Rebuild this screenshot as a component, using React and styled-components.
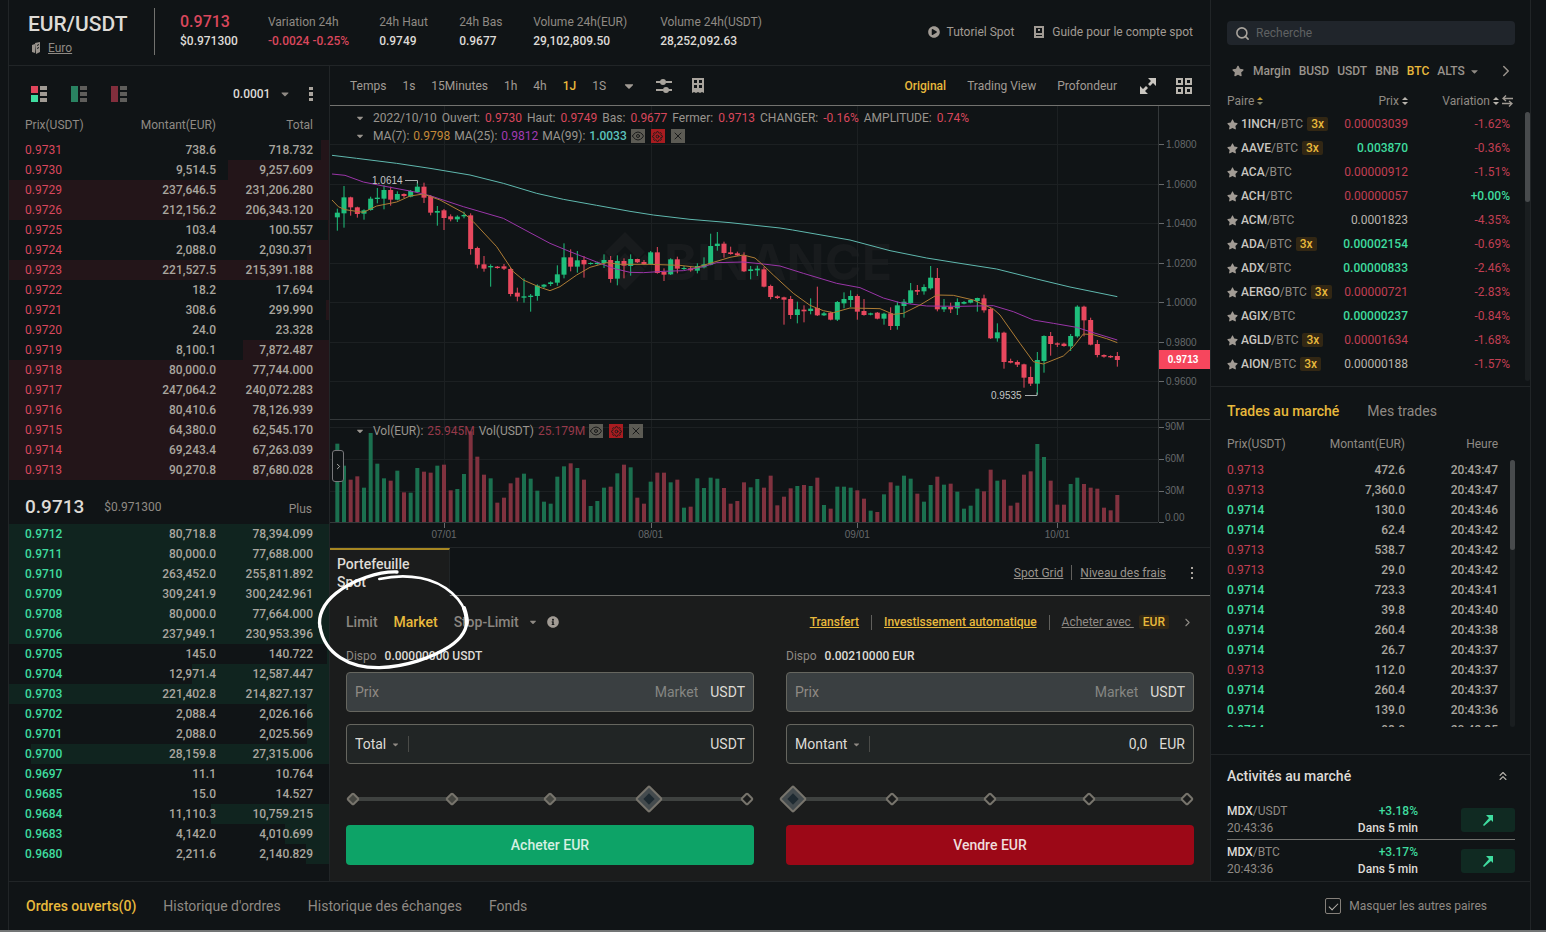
import React, { useState } from 'react'
import styled, { createGlobalStyle } from 'styled-components'
import {
    FaCaretDown, FaInfoCircle, FaPlayCircle, FaStar
} from 'react-icons/fa'
import { FiSearch, FiChevronRight, FiChevronsUp, FiEye, FiX, FiSettings } from 'react-icons/fi'

const c = {
    bg: '#101416',
    panel: '#1b1c1c',
    line: '#212527',
    bright: '#72726f',
    label: '#8f8a84',
    text: '#b9b5ae',
    white: '#dedbd6',
    red: '#d9475c',
    green: '#3fdc9f',
    yellow: '#e8b93c',
}

const Reset = createGlobalStyle`
*, *::before, *::after {
    box-sizing: border-box;
}
body {
    margin: 0;
    background: ${c.bg};
    color: ${c.text};
    font-family: Roboto, 'Liberation Sans', sans-serif;
    font-size: 12px;
    line-height: 16px;
}
h1, h2, p, ul {
    margin: 0;
    padding: 0;
    list-style: none;
}
button, select, input {
    margin: 0;
    padding: 0;
    border: 0;
    background: none;
    color: inherit;
    font: inherit;
    appearance: none;
    outline: none;
}
button, select {
    cursor: pointer;
}
table {
    border-collapse: collapse;
    table-layout: fixed;
}
th, td {
    padding: 0;
    font-weight: 400;
}
a {
    color: inherit;
}
svg {
    flex: none;
}
`

const Page = styled.div`
    min-height: 100vh;
    display: flex;
    flex-direction: column;
    border-bottom: 2px solid #737576;
`
const Shell = styled.div`
    flex: 1;
    display: flex;
    flex-direction: column;
    margin: 0 15px 0 8px;
    border-left: 1px solid ${c.line};
    border-right: 1px solid ${c.line};
`
const Main = styled.div`
    display: flex;
`
const Left = styled.div`
    flex: 1;
    min-width: 0;
    display: flex;
    flex-direction: column;
`
const Columns = styled.div`
    flex: 1;
    display: flex;
`

/* ---- header ---- */
const Header = styled.header`
    height: 66px;
    display: flex;
    align-items: center;
    padding-bottom: 2px;
    border-bottom: 1px solid ${c.line};
`
const Pair = styled.div`
    min-width: 145px;
    padding: 5px 0 0 19px;
`
const PairName = styled.h1`
    font-size: 21px;
    line-height: 24px;
    font-weight: 500;
    color: ${c.white};
`
const PairLink = styled.a`
    display: flex;
    align-items: center;
    gap: 7px;
    margin: 4px 0 0 3px;
    color: ${c.label};
`
const PairDivider = styled.span`
    width: 1px;
    height: 47px;
    margin-right: 25px;
    background: ${c.bright};
`
const Stats = styled.div`
    display: flex;
    gap: 30px;
`
const Stat = styled.div`
    min-width: ${props => props.$min}px;
    display: flex;
    flex-direction: column;
    gap: 3px;
    color: ${c.label};
`
const StatValue = styled.span`
    font-weight: 500;
    color: ${props => props.$color || c.white};
`
const LastPrice = styled.span`
    font-size: 16px;
    font-weight: 500;
    color: ${c.red};
`
const HelpLinks = styled.nav`
    display: flex;
    gap: 19px;
    margin-left: auto;
    padding-right: 17px;
`
const HelpLink = styled.a`
    display: flex;
    align-items: center;
    gap: 7px;
    color: #a19b94;
    text-decoration: none;
`

/* ---- order book ---- */
const Book = styled.section`
    width: 321px;
    flex: none;
    border-right: 1px solid ${c.line};
`
const BookTools = styled.div`
    display: flex;
    align-items: center;
    gap: 18px;
    height: 32px;
    margin-top: 12px;
    padding: 0 16px 0 22px;
`
const BookViews = styled.div`
    display: flex;
    gap: 24px;
    margin-right: auto;
`
const IconButton = styled.button`
    display: flex;
    opacity: ${props => props.$dim ? 0.55 : 1};
`
const Picker = styled.label`
    display: flex;
    align-items: center;
    gap: ${props => props.$gap || 4}px;
    color: ${props => props.$color || c.white};
    select {
        font-weight: ${props => props.$bold ? 500 : 400};
    }
    svg {
        color: ${c.label};
    }
`
const BookTable = styled.table`
    width: 100%;
    text-align: right;
    th, td {
        height: 20px;
    }
    th {
        height: 30px;
        color: ${c.label};
    }
    td {
        font-weight: 500;
        color: #a9a69f;
    }
    th:first-child, td:first-child {
        width: 96px;
        padding-left: 16px;
        text-align: left;
    }
    th:last-child, td:last-child {
        width: 113px;
        padding-right: 16px;
    }
    td:first-child {
        color: ${props => props.$side === 'buy' ? c.green : c.red};
        font-weight: ${props => props.$side === 'buy' ? 500 : 400};
    }
`
const MidPrice = styled.div`
    height: 44px;
    display: flex;
    align-items: center;
    gap: 20px;
    padding: 10px 17px 0 16px;
    color: ${c.label};
    strong {
        font-size: 19px;
        line-height: 24px;
        font-weight: 500;
        color: ${c.white};
    }
    a {
        margin: 3px 0 0 auto;
        text-decoration: none;
    }
`

/* ---- chart ---- */
const Center = styled.div`
    flex: 1;
    min-width: 0;
    display: flex;
    flex-direction: column;
`
const ChartBar = styled.div`
    height: 40px;
    display: flex;
    align-items: center;
    gap: 16px;
    padding: 0 18px 0 20px;
    border-bottom: 1px solid ${c.bright};
    color: #a19b94;
`
const BarButton = styled.button`
    display: flex;
    color: ${props => props.$active ? c.yellow : 'inherit'};
    font-weight: ${props => props.$active ? 500 : 'inherit'};
`
const ViewTabs = styled.div`
    display: flex;
    align-items: center;
    gap: 21px;
    margin-left: auto;
`
const BarIcons = styled.div`
    display: flex;
    align-items: center;
    gap: 20px;
    margin-left: ${props => props.$gap || 0}px;
`
const ChartBox = styled.div`
    position: relative;
    > svg {
        display: block;
        width: 100%;
        height: auto;
    }
`
const Legend = styled.div`
    position: absolute;
    top: ${props => props.$top}px;
    left: 25px;
    display: flex;
    flex-direction: column;
    gap: 2px;
`
const LegendRow = styled.div`
    display: flex;
    align-items: center;
    gap: ${props => props.$tight ? 4 : 5}px;
    white-space: nowrap;
    color: #99948e;
    > svg {
        margin-right: ${props => props.$tight ? 4 : 3}px;
    }
`
const Value = styled.span`
    color: ${props => props.$color || c.red};
    font-weight: ${props => props.$bold ? 500 : 400};
`
const LegendTools = styled.span`
    display: flex;
    gap: 6px;
`
const Tool = styled.button`
    width: 14px;
    height: 14px;
    display: flex;
    align-items: center;
    justify-content: center;
    background: ${props => props.$danger ? '#a81c20' : '#5c5b54'};
    color: #191a1a;
`
const Handle = styled.button`
    position: absolute;
    left: 2px;
    top: 344px;
    width: 12px;
    height: 32px;
    display: flex;
    align-items: center;
    justify-content: center;
    border: 1px solid #77777a;
    border-radius: 3px;
    background: ${c.bg};
    color: ${c.white};
`

/* ---- order ticket ---- */
const Ticket = styled.section`
    position: relative;
    flex: 1;
    display: flex;
    flex-direction: column;
    border-top: 1px solid ${c.line};
`
const TicketHead = styled.div`
    height: 48px;
    display: flex;
`
const WalletTab = styled.button`
    width: 120px;
    padding: 5px 30px 0 7px;
    display: flex;
    border-top: 2px solid #a68722;
    border-right: 1px solid ${c.line};
    background: ${c.panel};
    color: ${c.white};
    font-size: 14px;
    line-height: 18px;
    font-weight: 500;
    text-align: left;
`
const TicketLinks = styled.div`
    flex: 1;
    display: flex;
    align-items: center;
    justify-content: flex-end;
    gap: 8px;
    padding: 2px 16px 0 0;
    border-bottom: 1px solid ${c.bright};
    color: #99938c;
    button {
        margin-left: 16px;
    }
`
const Bar = styled.span`
    width: 1px;
    height: 15px;
    background: #605f5c;
`
const TicketBody = styled.div`
    flex: 1;
    padding: 14px 16px 16px;
    background: ${c.panel};
`
const TypeRow = styled.div`
    height: 24px;
    display: flex;
    align-items: center;
    justify-content: space-between;
`
const Types = styled.div`
    display: flex;
    align-items: center;
    gap: 16px;
    font-size: 14px;
    font-weight: 500;
    color: #8a8580;
`
const StopType = styled.div`
    display: flex;
    align-items: center;
    gap: 9px;
    > svg {
        color: #a19b94;
    }
`
const Funding = styled.div`
    display: flex;
    align-items: center;
    gap: 12px;
    color: ${c.label};
`
const BuyWith = styled.div`
    display: flex;
    align-items: center;
    gap: 5px;
`
const FundLink = styled.a`
    color: ${props => props.$plain ? c.label : c.yellow};
    font-weight: ${props => props.$plain ? 400 : 500};
`
const Badge = styled.span`
    padding: 0 4px;
    border-radius: 2px;
    background: #322714;
    color: ${c.yellow};
    font-weight: 500;
    line-height: 14px;
`
const Forms = styled.div`
    display: grid;
    grid-template-columns: 1fr 1fr;
    gap: 32px;
    margin-top: 14px;
`
const Form = styled.form`
    display: flex;
    flex-direction: column;
`
const Available = styled.p`
    display: flex;
    gap: 8px;
    margin-bottom: 8px;
    color: ${c.label};
    strong {
        color: ${c.white};
        font-weight: 500;
    }
`
const Field = styled.div`
    height: 40px;
    display: flex;
    align-items: center;
    gap: 12px;
    margin-bottom: 12px;
    padding: 0 8px;
    border: 1px solid #66665f;
    border-radius: 4px;
    background: ${props => props.$locked ? '#3a3f41' : '#212525'};
    color: ${c.label};
    font-size: 14px;
    input {
        flex: 1;
        min-width: 0;
        text-align: right;
        color: ${props => props.$locked ? '#858683' : c.white};
    }
    ${Picker} {
        padding-right: 8px;
        border-right: 1px solid #4a4b48;
    }
`
const Unit = styled.span`
    color: ${c.white};
`
const SliderBox = styled.div`
    position: relative;
    height: 26px;
    display: flex;
    align-items: center;
    justify-content: space-between;
    margin: 10px 0 13px;
    background: linear-gradient(#3f4240, #3f4240) center / calc(100% - 14px) 4px no-repeat;
    input {
        position: absolute;
        inset: 0;
        width: 100%;
        height: 100%;
        opacity: 0;
    }
`
const Mark = styled.span`
    width: 14px;
    height: 14px;
    display: flex;
    align-items: center;
    justify-content: center;
    &::before {
        content: '';
        flex: none;
        width: ${props => props.$big ? 20 : 10}px;
        height: ${props => props.$big ? 20 : 10}px;
        border: 2px solid #77746c;
        border-radius: 2px;
        background: ${props => props.$big
            ? 'linear-gradient(#1e2a31, #1e2a31) center / 8px 8px no-repeat #444b4e'
            : props.$passed ? '#454641' : c.panel};
        transform: rotate(45deg);
    }
`
const Submit = styled.button`
    height: 40px;
    border-radius: 4px;
    background: ${props => props.$sell ? '#9c0817' : '#0da367'};
    color: ${props => props.$sell ? '#f0dcdc' : '#d5f0e2'};
    font-size: 14px;
    font-weight: 500;
`
const Circle = styled.svg`
    position: absolute;
    left: -14px;
    top: 20px;
    width: 156px;
    height: 104px;
    pointer-events: none;
`

/* ---- right column ---- */
const Side = styled.aside`
    width: 320px;
    flex: none;
    border-left: 1px solid ${c.line};
`
const Markets = styled.section`
    padding: 21px 0 5px 16px;
`
const Search = styled.label`
    height: 24px;
    display: flex;
    align-items: center;
    gap: 6px;
    margin-right: 15px;
    padding: 0 8px;
    border-radius: 4px;
    background: #20252b;
    color: #a9a49d;
    input {
        flex: 1;
    }
    input::placeholder {
        color: #5f6162;
        opacity: 1;
    }
`
const MarketTabs = styled.div`
    height: 20px;
    display: flex;
    align-items: center;
    gap: 8px;
    margin: 16px 15px 0 5px;
    color: #99938c;
    font-weight: 500;
    > :first-child {
        margin-right: 1px;
    }
    > :last-child {
        margin-left: auto;
    }
`
const MarketHead = styled.table`
    width: 286px;
    margin: 12px 0 3px;
    color: ${c.label};
    text-align: right;
    th:first-child {
        width: 110px;
        text-align: left;
    }
    th:nth-child(2) {
        width: 71px;
    }
`
const HeadCell = styled.span`
    display: inline-flex;
    align-items: center;
    gap: 3px;
`
const ListRow = styled.div`
    height: ${props => props.$height}px;
    display: flex;
    justify-content: space-between;
    align-items: flex-start;
    overflow: hidden;
`
const ScrollTrack = styled.div`
    width: 5px;
    height: 100%;
    border-radius: 3px;
    background: #1a1e20;
    &::before {
        content: '';
        display: block;
        height: 90px;
        border-radius: 3px;
        background: #484b4d;
    }
`
const MarketTable = styled.table`
    width: 283px;
    text-align: right;
    td {
        height: 24px;
    }
    td:first-child {
        width: 110px;
    }
    td:nth-child(2) {
        width: 71px;
    }
`
const MarketName = styled.span`
    display: flex;
    align-items: center;
    white-space: nowrap;
    color: ${c.label};
    svg {
        margin-right: 3px;
        color: #a19b94;
    }
    b {
        font-weight: 500;
        color: #c9c6c0;
    }
    ${Badge} {
        margin-left: 4px;
    }
`
const Trades = styled.section`
    padding: 14px 15px 27px 16px;
    border-top: 1px solid ${c.line};
`
const TradeTabs = styled.div`
    height: 20px;
    display: flex;
    gap: 28px;
    font-size: 14px;
    line-height: 20px;
    color: ${c.label};
`
const TradeTable = styled.table`
    width: 271px;
    text-align: right;
    th {
        padding: 15px 0 8px;
        color: ${c.label};
    }
    td {
        height: 20px;
        font-weight: 500;
        color: #a9a69f;
    }
    th:first-child, td:first-child {
        width: 80px;
        text-align: left;
    }
    th:nth-child(2), td:nth-child(2) {
        width: 98px;
    }
`
const Activity = styled.section`
    padding: 11px 15px 0 16px;
    border-top: 1px solid ${c.line};
`
const ActivityHead = styled.div`
    display: flex;
    align-items: center;
    justify-content: space-between;
    margin-bottom: 13px;
    padding-right: 5px;
    h2 {
        font-size: 14px;
        line-height: 20px;
        font-weight: 500;
        color: ${c.white};
    }
`
const ActivityItem = styled.li`
    display: grid;
    grid-template-columns: 96px 95px 1fr;
    align-items: center;
    padding: 4px 0 3px;
    color: ${c.label};
    & + & {
        border-top: 1px solid ${c.bright};
    }
    b {
        font-weight: 500;
        color: ${c.white};
    }
`
const Lines = styled.div`
    display: flex;
    flex-direction: column;
    gap: 1px;
    text-align: ${props => props.$right ? 'right' : 'left'};
`
const Jump = styled.button`
    width: 54px;
    height: 24px;
    display: flex;
    align-items: center;
    justify-content: center;
    justify-self: end;
    border-radius: 3px;
    background: #102a22;
    color: ${c.green};
`

/* ---- footer ---- */
const Footer = styled.footer`
    flex: 1;
    min-height: 49px;
    display: flex;
    align-items: center;
    gap: 27px;
    padding: 0 43px 0 17px;
    border-top: 1px solid ${c.line};
    color: ${c.label};
    font-size: 14px;
`
const HideOthers = styled.label`
    display: flex;
    align-items: center;
    gap: 8px;
    margin-left: auto;
    font-size: 12px;
    input {
        position: relative;
        width: 16px;
        height: 16px;
        border: 1px solid #85807a;
        border-radius: 2px;
    }
    input:checked::after {
        content: '';
        position: absolute;
        left: 5px;
        top: 2px;
        width: 5px;
        height: 9px;
        border: solid #b9b5ae;
        border-width: 0 1px 1px 0;
        transform: rotate(45deg);
    }
`

const asks = [
    ['0.9731', '738.6', '718.732'],
    ['0.9730', '9,514.5', '9,257.609'],
    ['0.9729', '237,646.5', '231,206.280'],
    ['0.9726', '212,156.2', '206,343.120'],
    ['0.9725', '103.4', '100.557'],
    ['0.9724', '2,088.0', '2,030.371'],
    ['0.9723', '221,527.5', '215,391.188'],
    ['0.9722', '18.2', '17.694'],
    ['0.9721', '308.6', '299.990'],
    ['0.9720', '24.0', '23.328'],
    ['0.9719', '8,100.1', '7,872.487'],
    ['0.9718', '80,000.0', '77,744.000'],
    ['0.9717', '247,064.2', '240,072.283'],
    ['0.9716', '80,410.6', '78,126.939'],
    ['0.9715', '64,380.0', '62,545.170'],
    ['0.9714', '69,243.4', '67,263.039'],
    ['0.9713', '90,270.8', '87,680.028'],
]
const bids = [
    ['0.9712', '80,718.8', '78,394.099'],
    ['0.9711', '80,000.0', '77,688.000'],
    ['0.9710', '263,452.0', '255,811.892'],
    ['0.9709', '309,241.9', '300,242.961'],
    ['0.9708', '80,000.0', '77,664.000'],
    ['0.9706', '237,949.1', '230,953.396'],
    ['0.9705', '145.0', '140.722'],
    ['0.9704', '12,971.4', '12,587.447'],
    ['0.9703', '221,402.8', '214,827.137'],
    ['0.9702', '2,088.4', '2,026.166'],
    ['0.9701', '2,088.0', '2,025.569'],
    ['0.9700', '28,159.8', '27,315.006'],
    ['0.9697', '11.1', '10.764'],
    ['0.9685', '15.0', '14.527'],
    ['0.9684', '11,110.3', '10,759.215'],
    ['0.9683', '4,142.0', '4,010.699'],
    ['0.9680', '2,211.6', '2,140.829'],
]
const markets = [
    ['1INCH', true, '0.00003039', 'red', '-1.62%'],
    ['AAVE', true, '0.003870', 'green', '-0.36%'],
    ['ACA', false, '0.00000912', 'red', '-1.51%'],
    ['ACH', false, '0.00000057', 'red', '+0.00%'],
    ['ACM', false, '0.0001823', 'text', '-4.35%'],
    ['ADA', true, '0.00002154', 'green', '-0.69%'],
    ['ADX', false, '0.00000833', 'green', '-2.46%'],
    ['AERGO', true, '0.00000721', 'red', '-2.83%'],
    ['AGIX', false, '0.00000237', 'green', '-0.84%'],
    ['AGLD', true, '0.00001634', 'red', '-1.68%'],
    ['AION', true, '0.00000188', 'text', '-1.57%'],
]
const trades = [
    ['0.9713', '472.6', '20:43:47'],
    ['0.9713', '7,360.0', '20:43:47'],
    ['0.9714', '130.0', '20:43:46'],
    ['0.9714', '62.4', '20:43:42'],
    ['0.9713', '538.7', '20:43:42'],
    ['0.9713', '29.0', '20:43:42'],
    ['0.9714', '723.3', '20:43:41'],
    ['0.9714', '39.8', '20:43:40'],
    ['0.9714', '260.4', '20:43:38'],
    ['0.9714', '26.7', '20:43:37'],
    ['0.9713', '112.0', '20:43:37'],
    ['0.9714', '260.4', '20:43:37'],
    ['0.9714', '139.0', '20:43:36'],
    ['0.9714', '98.0', '20:43:35'],
]

// high, body top, body bottom, low (ticks, 3 per px) and 1 for a rising day
const candles = [
    [446, 458, 472, 512, 1], [378, 412, 460, 503, 1], [410, 412, 442, 467, 0], [440, 442, 462, 473, 0],
    [448, 451, 461, 479, 1], [410, 416, 450, 452, 1], [384, 413, 417, 430, 1], [376, 390, 416, 448, 1],
    [380, 390, 419, 437, 0], [394, 402, 419, 421, 1], [400, 402, 408, 414, 0], [390, 393, 410, 412, 1],
    [365, 380, 396, 398, 1], [368, 380, 413, 429, 0], [405, 408, 458, 466, 0], [438, 453, 458, 497, 1],
    [447, 451, 474, 510, 0], [463, 469, 478, 484, 0], [466, 470, 478, 486, 1], [455, 465, 469, 475, 1],
    [460, 466, 567, 584, 0], [560, 564, 614, 625, 0], [588, 613, 626, 635, 0], [613, 618, 622, 680, 1],
    [618, 620, 624, 626, 0], [612, 619, 626, 630, 0], [624, 627, 702, 709, 0], [683, 698, 710, 724, 0],
    [655, 709, 713, 728, 1], [702, 707, 711, 755, 1], [673, 677, 708, 722, 1], [672, 674, 680, 684, 1],
    [664, 667, 672, 678, 1], [616, 643, 668, 677, 1], [550, 592, 644, 655, 1], [568, 592, 620, 634, 0],
    [573, 601, 620, 638, 1], [588, 600, 613, 653, 0], [607, 609, 612, 614, 1], [605, 608, 612, 614, 1],
    [583, 600, 609, 624, 1], [588, 600, 657, 668, 0], [586, 603, 656, 676, 1], [595, 603, 617, 655, 0],
    [583, 597, 618, 647, 1], [596, 597, 607, 609, 0], [600, 606, 612, 614, 0], [573, 577, 612, 614, 1],
    [561, 577, 639, 641, 0], [625, 636, 644, 663, 0], [595, 598, 643, 645, 1], [590, 598, 626, 640, 0],
    [618, 624, 627, 630, 1], [618, 625, 631, 635, 0], [610, 618, 632, 640, 1], [592, 613, 622, 625, 1],
    [521, 558, 614, 616, 1], [516, 551, 558, 572, 1], [545, 551, 579, 593, 0], [560, 577, 582, 584, 0],
    [575, 580, 586, 588, 0], [577, 586, 634, 636, 0], [618, 628, 633, 658, 1], [617, 626, 631, 648, 1],
    [620, 628, 680, 682, 0], [674, 678, 711, 718, 0], [706, 709, 714, 717, 0], [710, 712, 719, 794, 0],
    [708, 717, 765, 777, 0], [725, 748, 765, 790, 1], [736, 749, 754, 787, 0], [715, 746, 753, 763, 1],
    [680, 744, 766, 768, 0], [756, 760, 766, 768, 1], [755, 758, 779, 781, 0], [723, 726, 779, 783, 1],
    [697, 717, 730, 745, 1], [691, 708, 720, 741, 1], [703, 708, 755, 779, 0], [717, 753, 765, 767, 0],
    [758, 760, 764, 766, 1], [756, 758, 776, 778, 0], [758, 761, 776, 794, 1], [742, 760, 798, 810, 0],
    [725, 736, 798, 809, 1], [717, 725, 738, 773, 1], [669, 691, 729, 731, 1], [675, 690, 695, 705, 0],
    [673, 681, 694, 704, 1], [618, 653, 685, 689, 1], [624, 654, 748, 754, 0], [717, 740, 748, 756, 1],
    [728, 741, 748, 759, 0], [715, 726, 745, 765, 1], [723, 726, 731, 733, 1], [719, 720, 728, 730, 1],
    [713, 714, 723, 755, 1], [704, 715, 751, 758, 0], [742, 747, 835, 837, 0], [790, 817, 835, 845, 1],
    [815, 818, 906, 926, 0], [896, 903, 908, 910, 0], [901, 906, 914, 921, 0], [911, 913, 953, 983, 0],
    [920, 951, 971, 978, 0], [876, 900, 971, 1004, 1], [826, 828, 903, 938, 1], [816, 828, 852, 887, 0],
    [847, 850, 854, 861, 0], [848, 851, 858, 860, 0], [822, 828, 859, 873, 1], [736, 740, 829, 833, 1],
    [737, 740, 781, 829, 0], [773, 780, 854, 856, 0], [840, 852, 885, 892, 0], [883, 885, 890, 893, 0],
    [886, 888, 892, 894, 0], [876, 888, 900, 920, 0],
]
const volumes = [
    235, 169, 127, 137, 103, 267, 175, 131, 124, 154, 89, 88, 162, 151, 148, 169, 172, 95, 99, 144,
    272, 196, 142, 131, 58, 73, 116, 133, 145, 130, 94, 61, 55, 136, 167, 176, 162, 127, 48, 63,
    103, 106, 146, 172, 164, 73, 55, 121, 148, 148, 119, 127, 43, 46, 131, 102, 133, 130, 102, 55,
    63, 119, 104, 129, 103, 139, 50, 76, 101, 108, 111, 108, 133, 51, 40, 106, 106, 103, 95, 70,
    34, 30, 83, 119, 109, 139, 130, 85, 61, 111, 136, 112, 115, 91, 40, 49, 100, 92, 157, 124,
    127, 49, 58, 142, 152, 234, 195, 124, 52, 52, 114, 133, 114, 103, 100, 43, 35, 81,
]
const averages = [
    ['#5fb8ae', '6,286 80,295 200,310 300,325 420,345 520,370 620,400 700,418 800,436 900,454 970,465 1080,478 1200,488 1350,504 1388,510 1560,540 1680,572 1790,594 1890,610 2000,627 2120,657 2220,681 2362,710'],
    ['#9a35a8', '6,342 45,346 100,366 160,378 250,395 300,407 400,440 520,475 600,518 660,550 720,575 800,606 850,625 900,637 940,638 1000,634 1060,632 1120,620 1160,608 1240,606 1300,612 1350,618 1420,640 1520,670 1590,683 1660,714 1710,728 1790,738 1890,739 1990,737 2050,755 2110,780 2170,790 2240,802 2280,815 2362,840'],
    ['#ad7c35', '6,420 25,440 45,449 100,457 140,438 200,426 240,408 280,402 330,420 400,458 430,485 500,560 550,635 580,660 630,682 660,692 690,680 740,645 780,622 830,608 870,613 960,613 1050,616 1100,622 1140,610 1200,592 1240,585 1275,594 1300,616 1330,645 1390,700 1440,736 1480,752 1510,758 1560,744 1650,746 1690,763 1720,760 1770,735 1820,705 1870,706 1930,720 1990,747 2010,765 2070,850 2110,905 2140,912 2200,888 2230,860 2260,822 2290,824 2330,836 2362,848'],
]

const tickY = v => (v - 138) / 3
const dayX = i => (22 + 20 * i) / 3
const toPoints = s => s.split(' ').map(p => {
    const [x, y] = p.split(',').map(Number)
    return `${x / 3},${tickY(y)}`
}).join(' ')

const priceAxis = ['1.0800', '1.0600', '1.0400', '1.0200', '1.0000', '0.9800', '0.9600']
const volumeAxis = ['90M', '60M', '30M', '0.00']
const months = [['07/01', 16], ['08/01', 47], ['09/01', 78], ['10/01', 108]]

const PriceChart = () => (
    <svg viewBox="0 0 880 441" role="img" aria-label="EUR/USDT">
        <g fill="#181b1d">
            <path d="M295 126l20 20-7 7-13-13-13 13-7-7zM295 184l20-20-7-7-13 13-13-13-7 7zM295 147l8 8-8 8-8-8zM275 148l7 7-7 7-7-7zM315 148l7 7-7 7-7-7z" />
            <text x="334" y="174" fontFamily="Inter, Roboto, sans-serif" fontSize="50" fontWeight="700">BINANCE</text>
        </g>
        <g stroke="#1c2022">
            {priceAxis.map((p, i) => <path key={p} d={`M0 ${38.5 + Math.round(i * 39.5)}H828`} />)}
            {[321.5, 353.5, 385.5].map(y => <path key={y} d={`M0 ${y}H828`} />)}
            {months.map(([m, i]) => <path key={m} d={`M${Math.round(dayX(i)) + 0.5} 0V416`} />)}
        </g>
        <path d="M0 313.5H880M828.5 0V416M0 416.5H828" stroke="#34383a" fill="none" />
        {candles.map(([high, top, bottom, low, up], i) => (
            <g key={i} fill={up ? '#1fbf7c' : '#e8485e'}>
                <rect x={dayX(i) - 0.5} y={tickY(high)} width="1" height={(low - high) / 3} />
                <rect x={dayX(i) - 2.5} y={tickY(top)} width="5" height={Math.max((bottom - top) / 3, 1)} />
            </g>
        ))}
        {volumes.map((v, i) => (
            <rect key={i} x={dayX(i) - 2} y={416 - v / 3} width="4" height={v / 3}
                fill={candles[i][4] ? '#1b704f' : '#80323f'} />
        ))}
        {averages.map(([color, line]) => (
            <polyline key={color} points={toPoints(line)} fill="none" stroke={color} strokeLinejoin="round" />
        ))}
        <g fontFamily="'Liberation Sans', Arial, sans-serif" fontSize="10" fill="#66696b">
            {priceAxis.map((p, i) => (
                <g key={p}>
                    <path d={`M829 ${38.5 + Math.round(i * 39.5)}h5`} stroke="#66696b" />
                    <text x="836" y={42 + Math.round(i * 39.5)}>{p}</text>
                </g>
            ))}
            {volumeAxis.map((v, i) => (
                <g key={v}>
                    <path d={`M829 ${i === 3 ? 416.5 : 321.5 + i * 32}h5`} stroke="#66696b" />
                    <text x="835" y={i === 3 ? 415 : 324 + i * 32}>{v}</text>
                </g>
            ))}
            {months.map(([m, i]) => (
                <g key={m}>
                    <path d={`M${Math.round(dayX(i)) + 0.5} 417v5`} stroke="#66696b" />
                    <text x={dayX(i)} y="432" textAnchor="middle">{m}</text>
                </g>
            ))}
            <g fill="#c4c6c6">
                <text x="42" y="78">1.0614</text>
                <text x="661" y="293">0.9535</text>
                <path d="M75 74.5h12.5v3M695 289.5h12v-3" stroke="#a9adad" fill="none" />
            </g>
        </g>
        <rect x="829" y="244" width="51" height="19" fill="#f6465d" />
        <text x="853" y="257" textAnchor="middle" fontFamily="'Liberation Sans', Arial, sans-serif" fontSize="10"
            fontWeight="700" fill="#fff">0.9713</text>
    </svg>
)

const BookIcon = ({ top, bottom }) => (
    <svg width="16" height="16">
        <path d="M0 0h7v7H0z" fill={top} />
        <path d={top === bottom ? 'M0 0h7v16H0z' : 'M0 9h7v7H0z'} fill={bottom} />
        <path d="M9 0h7v4H9zM9 6h7v4H9zM9 12h7v4H9z" fill="#a19b94" />
    </svg>
)
const CoinIcon = () => (
    <svg width="10" height="12" fill="#99938c">
        <path d="M1 3l3-1v9l-3-1zM4 1l5-1v10l-4 2zM6 3v1l2-1V2zM6 6v1l2-1V5z" fillRule="evenodd" />
    </svg>
)
const GuideIcon = () => (
    <svg width="12" height="12" fill="#a19b94">
        <path d="M1 0h10v12H1zM3 2v5h6V2zM3 9v1h6V9zM5 3h2v2H5z" fillRule="evenodd" />
    </svg>
)
const DotsIcon = ({ small }) => (
    <svg width="4" height="16" fill="#a9a49d">
        {small
            ? <path d="M1 2h2v2H1zM1 7h2v2H1zM1 12h2v2H1z" />
            : <path d="M0 1h4v3H0zM0 6h4v4H0zM0 12h4v3H0z" />}
    </svg>
)
const SlidersIcon = () => (
    <svg width="16" height="16" fill="#a9a49d">
        <path d="M0 3h5v2H0zM10 3h6v2h-6zM0 11h7v2H0zM12 11h4v2h-4z" />
        <circle cx="7" cy="4" r="3" />
        <circle cx="10" cy="12" r="3" />
    </svg>
)
const IndicatorIcon = () => (
    <svg width="12" height="16" fill="#a9a49d">
        <path d="M0 0h12v15l-2-1-2 1-2-1-2 1-2-1-2 1zM2 2v3h3V2zM7 2v3h3V2zM2 7v3h3V7zM7 7v3h3V7z" fillRule="evenodd" />
    </svg>
)
const ExpandIcon = () => (
    <svg width="16" height="16" fill="#c9c6c0">
        <path d="M8 0h8v8l-3-3-3 3-2-2 3-3zM0 8l3 3 3-3 2 2-3 3 3 3H0z" />
    </svg>
)
const GridIcon = () => (
    <svg width="16" height="16" fill="none" stroke="#b9b5ae" strokeWidth="2">
        <path d="M1 1h5v5H1zM10 1h5v5h-5zM1 10h5v5H1zM10 10h5v5h-5z" />
    </svg>
)
const SortIcon = ({ color = '#b9b5ae', dim }) => (
    <svg width="6" height="8">
        <path d="M3 0l3 3H0z" fill={color} />
        <path d="M3 8l3-3H0z" fill={dim || color} />
    </svg>
)
const SwapIcon = () => (
    <svg width="11" height="12" fill="none" stroke="#a19b94" strokeWidth="1.3">
        <path d="M11 3.5H1M4 .5l-3 3 3 2.500M0 8.500h10M7 6l3 2.500-3 3" />
    </svg>
)
const JumpIcon = () => (
    <svg width="12" height="12">
        <path d="M4 1h7v7L9 6l-7 6-1-1 6-7z" fill="currentColor" />
    </svg>
)

// anything past this total fills the whole row
const FULL_DEPTH = 29300
const depthStyle = (total, color) => {
    const share = Math.min(Number(total.replace(/,/g, '')) / FULL_DEPTH, 1) * 100
    return { background: `linear-gradient(to left, ${color} ${share}%, transparent ${share}%)` }
}

const BookRows = ({ rows, color }) => (
    <tbody>
        {rows.map(([price, amount, total]) => (
            <tr key={price} style={depthStyle(total, color)}>
                <td>{price}</td><td>{amount}</td><td>{total}</td>
            </tr>
        ))}
    </tbody>
)

const OrderBook = () => (
    <Book>
        <BookTools>
            <BookViews>
                <IconButton aria-label="Carnet complet"><BookIcon top="#e0455b" bottom={c.green} /></IconButton>
                <IconButton $dim aria-label="Achats"><BookIcon top={c.green} bottom={c.green} /></IconButton>
                <IconButton $dim aria-label="Ventes"><BookIcon top="#e0455b" bottom="#e0455b" /></IconButton>
            </BookViews>
            <Picker $bold $gap={8}>
                <select aria-label="Précision"><option>0.0001</option></select>
                <FaCaretDown size={12} />
            </Picker>
            <IconButton aria-label="Options"><DotsIcon /></IconButton>
        </BookTools>
        <BookTable $side="sell">
            <thead>
                <tr><th>Prix(USDT)</th><th>Montant(EUR)</th><th>Total</th></tr>
            </thead>
            <BookRows rows={asks} color="#231519" />
        </BookTable>
        <MidPrice>
            <strong>0.9713</strong>
            <span>$0.971300</span>
            <a href="#book">Plus</a>
        </MidPrice>
        <BookTable $side="buy">
            <BookRows rows={bids} color="#10241f" />
        </BookTable>
    </Book>
)

const Tools = () => (
    <LegendTools>
        <Tool aria-label="Afficher"><FiEye size={12} /></Tool>
        <Tool $danger aria-label="Réglages"><FiSettings size={11} /></Tool>
        <Tool aria-label="Fermer"><FiX size={12} /></Tool>
    </LegendTools>
)

const Chart = () => {
    const [interval, setCurrent] = useState('1J')
    const [view, setView] = useState('Original')
    return (
        <>
            <ChartBar>
                {['Temps', '1s', '15Minutes', '1h', '4h', '1J', '1S'].map(name => (
                    <BarButton key={name} $active={name === interval} onClick={() => setCurrent(name)}>{name}</BarButton>
                ))}
                <BarIcons>
                    <FaCaretDown size={14} />
                    <SlidersIcon />
                    <IndicatorIcon />
                </BarIcons>
                <ViewTabs>
                    {['Original', 'Trading View', 'Profondeur'].map(name => (
                        <BarButton key={name} $active={name === view} onClick={() => setView(name)}>{name}</BarButton>
                    ))}
                </ViewTabs>
                <BarIcons $gap={7}>
                    <IconButton aria-label="Plein écran"><ExpandIcon /></IconButton>
                    <IconButton aria-label="Disposition"><GridIcon /></IconButton>
                </BarIcons>
            </ChartBar>
            <ChartBox>
                <PriceChart />
                <Legend $top={4}>
                    <LegendRow>
                        <FaCaretDown size={10} />
                        <span>2022/10/10</span>
                        <span>Ouvert:</span><Value>0.9730</Value>
                        <span>Haut:</span><Value>0.9749</Value>
                        <span>Bas:</span><Value>0.9677</Value>
                        <span>Fermer:</span><Value>0.9713</Value>
                        <span>CHANGER:</span><Value>-0.16%</Value>
                        <span>AMPLITUDE:</span><Value>0.74%</Value>
                    </LegendRow>
                    <LegendRow $tight>
                        <FaCaretDown size={10} />
                        <span>MA(7):</span><Value $color="#c48a38">0.9798</Value>
                        <span>MA(25):</span><Value $color="#a23bb2">0.9812</Value>
                        <span>MA(99):</span><Value $color="#5cc3bd" $bold>1.0033</Value>
                        <Tools />
                    </LegendRow>
                </Legend>
                <Legend $top={317}>
                    <LegendRow $tight>
                        <FaCaretDown size={10} />
                        <span>Vol(EUR):</span><Value $color="#96394a">25.945M</Value>
                        <span>Vol(USDT)</span><Value $color="#96394a">25.179M</Value>
                        <Tools />
                    </LegendRow>
                </Legend>
                <Handle aria-label="Outils"><FiChevronRight size={9} /></Handle>
            </ChartBox>
        </>
    )
}

const Slider = ({ value, label }) => {
    const [percent, setPercent] = useState(value)
    return (
        <SliderBox>
            {[0, 25, 50, 75, 100].map(step => (
                <Mark key={step} $big={step === percent} $passed={step < percent} />
            ))}
            <input type="range" min="0" max="100" step="25" value={percent} aria-label={label}
                onChange={e => setPercent(Number(e.target.value))} />
        </SliderBox>
    )
}

const OrderForm = ({ side, available, amountLabel, amount, unit, percent }) => (
    <Form onSubmit={e => e.preventDefault()}>
        <Available>Dispo <strong>{available}</strong></Available>
        <Field $locked>
            <label htmlFor={`${side}-price`}>Prix</label>
            <input id={`${side}-price`} value="Market" readOnly />
            <Unit>USDT</Unit>
        </Field>
        <Field>
            <Picker>
                <select aria-label="Type de montant"><option>{amountLabel}</option></select>
                <FaCaretDown size={9} />
            </Picker>
            <input aria-label={amountLabel} defaultValue={amount} />
            <Unit>{unit}</Unit>
        </Field>
        <Slider value={percent} label={`Pourcentage ${amountLabel}`} />
        <Submit $sell={side === 'sell'}>{side === 'sell' ? 'Vendre EUR' : 'Acheter EUR'}</Submit>
    </Form>
)

const OrderTicket = () => {
    const [type, setType] = useState('Market')
    return (
        <Ticket>
            <TicketHead>
                <WalletTab>Portefeuille Spot</WalletTab>
                <TicketLinks>
                    <a href="#grid">Spot Grid</a>
                    <Bar />
                    <a href="#fees">Niveau des frais</a>
                    <IconButton aria-label="Options"><DotsIcon small /></IconButton>
                </TicketLinks>
            </TicketHead>
            <TicketBody>
                <TypeRow>
                    <Types>
                        {['Limit', 'Market'].map(name => (
                            <BarButton key={name} $active={name === type} onClick={() => setType(name)}>{name}</BarButton>
                        ))}
                        <StopType>
                            <Picker $color="#8a8580" $bold $gap={8}>
                                <select aria-label="Type d'ordre"><option>Stop-Limit</option></select>
                                <FaCaretDown size={10} />
                            </Picker>
                            <FaInfoCircle size={12} />
                        </StopType>
                    </Types>
                    <Funding>
                        <FundLink href="#transfer">Transfert</FundLink>
                        <Bar />
                        <FundLink href="#auto">Investissement automatique</FundLink>
                        <Bar />
                        <BuyWith>
                            <FundLink $plain href="#buy">Acheter avec&nbsp;</FundLink>
                            <Badge>EUR</Badge>
                        </BuyWith>
                        <FiChevronRight size={13} />
                    </Funding>
                </TypeRow>
                <Forms>
                    <OrderForm side="buy" available="0.00000000 USDT" amountLabel="Total" unit="USDT" percent={75} />
                    <OrderForm side="sell" available="0.00210000 EUR" amountLabel="Montant" amount="0,0" unit="EUR" percent={0} />
                </Forms>
            </TicketBody>
            <Circle viewBox="0 0 468 312" fill="none" stroke="#fff" strokeLinecap="round">
                <path d="M243 12C190 10 110 35 60 76C20 108 6 146 12 176" strokeWidth="10" />
                <path d="M12 176C26 258 100 300 190 299C270 296 350 268 400 236C436 212 456 186 452 150" strokeWidth="10" />
                <path d="M452 150C444 96 388 44 314 30C270 22 222 26 190 33" strokeWidth="8" />
                <path d="M452 165C453 150 449 134 444 120" strokeWidth="12" />
            </Circle>
        </Ticket>
    )
}

const tone = change => change.startsWith('+') ? c.green : '#c13f53'

const SidePanel = () => (
    <Side>
        <Markets>
            <Search>
                <FiSearch size={15} strokeWidth={2.5} />
                <input type="search" placeholder="Recherche" aria-label="Recherche" />
            </Search>
            <MarketTabs>
                <FaStar size={12} />
                {['Margin', 'BUSD', 'USDT', 'BNB', 'BTC'].map(name => (
                    <BarButton key={name} $active={name === 'BTC'}>{name}</BarButton>
                ))}
                <Picker $color="#99938c" $bold>
                    <select aria-label="Autres"><option>ALTS</option></select>
                    <FaCaretDown size={11} />
                </Picker>
                <FiChevronRight size={18} />
            </MarketTabs>
            <MarketHead>
                <thead>
                    <tr>
                        <th><HeadCell>Paire <SortIcon color="#c79a25" dim="#7d8069" /></HeadCell></th>
                        <th><HeadCell>Prix <SortIcon /></HeadCell></th>
                        <th><HeadCell>Variation <SortIcon /> <SwapIcon /></HeadCell></th>
                    </tr>
                </thead>
            </MarketHead>
            <ListRow $height={269}>
                <MarketTable>
                    <tbody>
                        {markets.map(([name, margin, price, color, change]) => (
                            <tr key={name}>
                                <td>
                                    <MarketName>
                                        <FaStar size={11} /><b>{name}</b>/BTC{margin && <Badge>3x</Badge>}
                                    </MarketName>
                                </td>
                                <td>
                                    <Value $color={color === 'red' ? '#c13f53' : c[color]} $bold={color === 'green'}>{price}</Value>
                                </td>
                                <td><Value $color={tone(change)} $bold={change.startsWith('+')}>{change}</Value></td>
                            </tr>
                        ))}
                    </tbody>
                </MarketTable>
                <ScrollTrack />
            </ListRow>
        </Markets>
        <Trades>
            <TradeTabs>
                <BarButton $active>Trades au marché</BarButton>
                <BarButton>Mes trades</BarButton>
            </TradeTabs>
            <TradeTable>
                <thead>
                    <tr><th>Prix(USDT)</th><th>Montant(EUR)</th><th>Heure</th></tr>
                </thead>
            </TradeTable>
            <ListRow $height={267}>
                <TradeTable>
                    <tbody>
                        {trades.map(([price, amount, time], i) => (
                            <tr key={i}>
                                <td>
                                    <Value $color={price === '0.9713' ? '#c13f53' : c.green} $bold={price !== '0.9713'}>{price}</Value>
                                </td>
                                <td>{amount}</td>
                                <td>{time}</td>
                            </tr>
                        ))}
                    </tbody>
                </TradeTable>
                <ScrollTrack />
            </ListRow>
        </Trades>
        <Activity>
            <ActivityHead>
                <h2>Activités au marché</h2>
                <FiChevronsUp size={14} />
            </ActivityHead>
            <ul>
                {[['USDT', '+3.18%'], ['BTC', '+3.17%']].map(([quote, change]) => (
                    <ActivityItem key={quote}>
                        <Lines>
                            <span><b>MDX</b>/{quote}</span>
                            <span>20:43:36</span>
                        </Lines>
                        <Lines $right>
                            <Value $color={c.green} $bold>{change}</Value>
                            <b>Dans 5 min</b>
                        </Lines>
                        <Jump aria-label={`Voir MDX/${quote}`}><JumpIcon /></Jump>
                    </ActivityItem>
                ))}
            </ul>
        </Activity>
    </Side>
)

const App = () => (
    <>
        <Reset />
        <Page>
            <Shell>
                <Main>
                    <Left>
                        <Header>
                            <Pair>
                                <PairName>EUR/USDT</PairName>
                                <PairLink href="#euro"><CoinIcon />Euro</PairLink>
                            </Pair>
                            <PairDivider />
                            <Stats>
                                <Stat $min={55}>
                                    <LastPrice>0.9713</LastPrice>
                                    <StatValue>$0.971300</StatValue>
                                </Stat>
                                <Stat $min={79}>Variation 24h<StatValue $color={c.red}>-0.0024 -0.25%</StatValue></Stat>
                                <Stat $min={50}>24h Haut<StatValue>0.9749</StatValue></Stat>
                                <Stat $min={44}>24h Bas<StatValue>0.9677</StatValue></Stat>
                                <Stat $min={97}>Volume 24h(EUR)<StatValue>29,102,809.50</StatValue></Stat>
                                <Stat $min={101}>Volume 24h(USDT)<StatValue>28,252,092.63</StatValue></Stat>
                            </Stats>
                            <HelpLinks>
                                <HelpLink href="#tutorial"><FaPlayCircle size={12} />Tutoriel Spot</HelpLink>
                                <HelpLink href="#guide"><GuideIcon />Guide pour le compte spot</HelpLink>
                            </HelpLinks>
                        </Header>
                        <Columns>
                            <OrderBook />
                            <Center>
                                <Chart />
                                <OrderTicket />
                            </Center>
                        </Columns>
                    </Left>
                    <SidePanel />
                </Main>
                <Footer>
                    <BarButton $active>Ordres ouverts(0)</BarButton>
                    <BarButton>Historique d'ordres</BarButton>
                    <BarButton>Historique des échanges</BarButton>
                    <BarButton>Fonds</BarButton>
                    <HideOthers>
                        <input type="checkbox" defaultChecked />
                        Masquer les autres paires
                    </HideOthers>
                </Footer>
            </Shell>
        </Page>
    </>
)

export default App
